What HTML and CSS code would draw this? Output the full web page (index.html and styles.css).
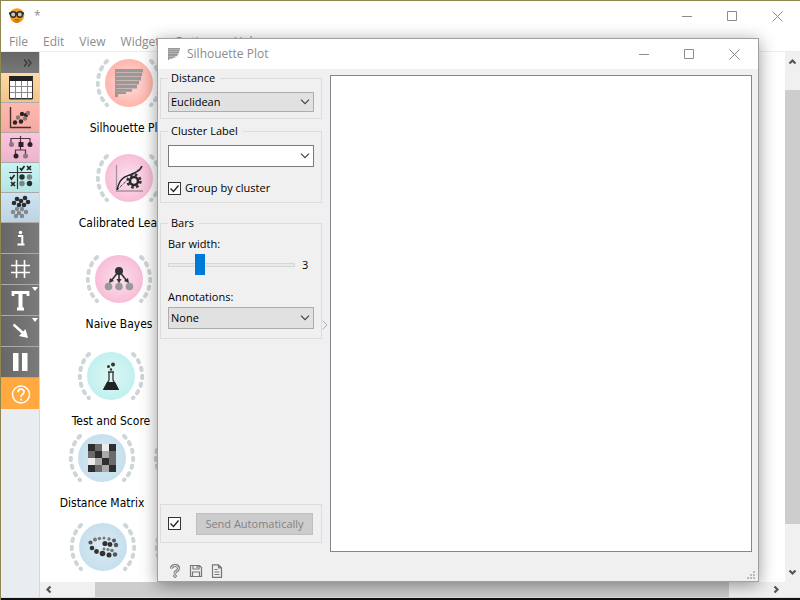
FILE: index.html
```html
<!DOCTYPE html>
<html lang="en">
<head>
<meta charset="utf-8">
<title>Silhouette Plot</title>
<link rel="stylesheet" href="styles.css">
</head>
<body>
<svg class="defs" aria-hidden="true">
  <defs>
    <radialGradient id="red"><stop offset="0" stop-color="#fee0dc"/><stop offset="1" stop-color="#ffb5ac"/></radialGradient>
    <radialGradient id="pink"><stop offset="0" stop-color="#fbe2ee"/><stop offset="1" stop-color="#f8bdd8"/></radialGradient>
    <radialGradient id="cyan"><stop offset="0" stop-color="#dff6f4"/><stop offset="1" stop-color="#c0f1ef"/></radialGradient>
    <radialGradient id="blue"><stop offset="0" stop-color="#dcebf4"/><stop offset="1" stop-color="#c6dfee"/></radialGradient>
    <symbol id="arcs" viewBox="-34 -34 68 68">
      <path d="M-22-22A31 31 0 0 0-22 22M22-22A31 31 0 0 1 22 22" fill="none" stroke="#cdd5d9" stroke-width="4" stroke-linecap="round" stroke-dasharray="2.400 5.600"/>
    </symbol>
    <symbol id="silhouette" viewBox="0 0 28 28">
      <path d="M0 0h28v3.5H0zM0 4h27v3.5H0zM0 8h26v3.5H0zM0 12h24v3.5H0zM0 16h22v3.5H0zM0 20h17v2.7H0zM0 23h11v2H0zM0 25h3v3H0z"/>
      <path d="M0 0h1v28H0z"/>
    </symbol>
    <symbol id="min" viewBox="0 0 11 11"><path d="M0 5.5h10" fill="none" stroke="currentColor"/></symbol>
    <symbol id="max" viewBox="0 0 11 11"><path d="M.5.5h9v9h-9z" fill="none" stroke="currentColor"/></symbol>
    <symbol id="close" viewBox="0 0 11 11"><path d="M.5.5l10 10M10.5.5l-10 10" fill="none" stroke="currentColor"/></symbol>
    <symbol id="chevron" viewBox="0 0 10 6"><path d="M1 .7l4 4 4-4" fill="none" stroke="#444" stroke-width="1.2"/></symbol>
    <symbol id="arrow" viewBox="0 0 9 7"><path d="M1.5 5.5l3-3 3 3" fill="none" stroke="#555" stroke-width="2.2"/></symbol>
  </defs>
</svg>

<div class="window">
  <header class="titlebar">
    <svg class="logo" viewBox="0 0 16 16" aria-hidden="true">
      <circle cx="8" cy="7.5" r="7.3" fill="#f4a01c"/>
      <path d="M3 11q5 4 9 0-1 4-5 4-3-1-4-4z" fill="#d97a10"/>
      <path d="M0 4.3h15v2.2H0z" fill="#333"/>
      <circle cx="4.2" cy="6.5" r="2.7" fill="#c9c9c9" stroke="#2b2b2b" stroke-width="1.4"/>
      <circle cx="10.8" cy="6.5" r="2.7" fill="#c9c9c9" stroke="#2b2b2b" stroke-width="1.4"/>
      <path d="M6 11.5q2 1.2 4 0" fill="none" stroke="#8a4b08"/>
    </svg>
    <span class="caption">*</span>
    <div class="controls">
      <button aria-label="Minimize"><svg><use href="#min"/></svg></button>
      <button aria-label="Maximize"><svg><use href="#max"/></svg></button>
      <button aria-label="Close"><svg><use href="#close"/></svg></button>
    </div>
  </header>
  <nav class="menubar">
    <a href="#">File</a><a href="#">Edit</a><a href="#">View</a><a href="#">Widget</a><a href="#">Options</a><a href="#">Help</a>
  </nav>

  <div class="workspace">
    <aside class="dock">
      <button class="expand" aria-label="Expand"><svg viewBox="0 0 9 8" width="9" height="8"><path d="M1 .5L4 4 1 7.500M5 .5L8 4 5 7.500" fill="none" stroke="#3a3a3a" stroke-width="1.3"/></svg></button>
      <button class="category data" aria-label="Data"><svg viewBox="0 0 39 30">
        <path d="M8.500 4.500h23v21h-23z" fill="#fff" stroke="#333"/><path d="M8 3h24v5H8z" fill="#222"/><path d="M8 13.500h24M8 19.500h24M14.500 8v18M20.500 8v18M26.500 8v18" stroke="#8a8a8a" fill="none"/><path d="M8.500 4v22h23V4" fill="none" stroke="#333"/>
      </svg></button>
      <button class="category visualize" aria-label="Visualize"><svg viewBox="0 0 39 30">
        <path d="M9.500 4v20.500H30" fill="none" stroke="#4b2c2c" stroke-width="1.4"/>
        <g fill="#2c2222"><circle cx="21" cy="11" r="2.200"/><circle cx="25" cy="12" r="2.200"/><circle cx="14" cy="19.500" r="2.200"/><circle cx="20" cy="18.500" r="2.200"/></g>
        <g fill="#8d7775"><circle cx="27" cy="10" r="2.200"/><circle cx="17" cy="14.500" r="2.200"/><circle cx="24" cy="15.500" r="2.200"/></g>
      </svg></button>
      <button class="category model" aria-label="Model"><svg viewBox="0 0 39 30">
        <path d="M10 10V5.500h19V10M19.500 3v8M19.500 11v6M14.500 22v-5h10v5" fill="none" stroke="#54333f" stroke-width="1.2"/>
        <g fill="#2c2226"><path d="M17.500 9h5v5h-5z"/><circle cx="29" cy="11.500" r="2.500"/><circle cx="15" cy="23" r="2.500"/></g>
        <g fill="#8d7780"><circle cx="10.500" cy="11.500" r="2.500"/><circle cx="24.500" cy="23" r="2.500"/></g>
      </svg></button>
      <button class="category evaluate" aria-label="Evaluate"><svg viewBox="0 0 39 30">
        <path d="M8 9.500h23M16.500 3v23" fill="none" stroke="#333" stroke-width="1.2"/>
        <path d="M19 5l1.500 2 3-4M26 3l4 4M30 3l-4 4M9 14l1.500 2 3-4M10 19l4 4M14 19l-4 4" fill="none" stroke="#222" stroke-width="1.7"/>
        <g fill="#2a2d2d"><circle cx="21" cy="14" r="2.700"/><circle cx="28.500" cy="20.500" r="2.700"/></g>
        <g fill="#778585"><circle cx="28.500" cy="14" r="2.700"/><circle cx="21" cy="20.500" r="2.700"/></g>
      </svg></button>
      <button class="category cluster" aria-label="Unsupervised"><svg viewBox="0 0 39 30">
        <g fill="#2a2d2f"><circle cx="16" cy="6" r="2.300"/><circle cx="24" cy="5" r="2.300"/><circle cx="20" cy="8" r="2.300"/><circle cx="13" cy="10" r="2.300"/><circle cx="27" cy="9" r="2.300"/><circle cx="18" cy="12" r="2.300"/><circle cx="23" cy="12" r="2.300"/></g>
        <g fill="#82888c"><circle cx="16" cy="16" r="2.200"/><circle cx="21" cy="16" r="2.200"/><circle cx="12" cy="19" r="2.200"/><circle cx="18" cy="20" r="2.200"/><circle cx="25" cy="19" r="2.200"/><circle cx="15" cy="23" r="2.200"/><circle cx="21" cy="23" r="2.200"/></g>
      </svg></button>
      <button class="action" aria-label="Info"><svg viewBox="0 0 39 30"><circle cx="19.500" cy="9.500" r="1.800" fill="#fff"/><path d="M17 13h4.300v8.500M16.500 21.500h7" fill="none" stroke="#fff" stroke-width="2"/></svg></button>
      <button class="action" aria-label="Grid"><svg viewBox="0 0 39 30"><path d="M10 11.500h19M10 18.500h19M15.500 6v18M23.500 6v18" fill="none" stroke="#fff" stroke-width="1.600"/></svg></button>
      <button class="action" aria-label="Text"><svg viewBox="0 0 39 30"><path d="M12 11V7.500h15V11M19.500 7v17M16 24h7" fill="none" stroke="#fff" stroke-width="2.800"/><path d="M17.500 8h4v17h-4z" fill="#fff"/><path d="M31 2h6l-3 4z" fill="#fff"/></svg></button>
      <button class="action" aria-label="Arrow"><svg viewBox="0 0 39 30"><path d="M12.500 8.500l10 9" stroke="#fff" stroke-width="2.400"/><path d="M27 22l-9-2 6.500-7z" fill="#fff"/><path d="M31 2h6l-3 4z" fill="#fff"/></svg></button>
      <button class="action" aria-label="Pause"><svg viewBox="0 0 39 30"><path d="M12 6h5.500v18H12zM21 6h5.500v18H21z" fill="#fff"/></svg></button>
      <button class="action help" aria-label="Help"><svg viewBox="0 0 39 30"><circle cx="20" cy="15.500" r="8.500" fill="none" stroke="#fff" stroke-width="1.500"/><path d="M17 13.200q0-3 3-3t3 2.800q0 1.500-1.700 2.500-1.300.8-1.300 2.500M20 19.500v2" fill="none" stroke="#fff" stroke-width="1.700"/></svg></button>
    </aside>

    <main class="canvas">
      <figure class="node silhouette">
        <svg viewBox="-34 -34 68 68"><use href="#arcs" x="-34" y="-34" width="68" height="68"/><circle r="24" fill="url(#red)"/><use href="#silhouette" x="-14" y="-14" width="28" height="28" fill="#999"/></svg>
        <figcaption>Silhouette Plot</figcaption>
      </figure>
      <figure class="node calibrated">
        <svg viewBox="-34 -34 68 68"><use href="#arcs" x="-34" y="-34" width="68" height="68"/><circle r="24" fill="url(#pink)"/>
          <path d="M-12.500-13v26H14" fill="none" stroke="#a5939c" stroke-width="1.300"/>
          <path d="M-12 12C-9-2-3-1 3-4S11-7 13-12" fill="none" stroke="#222" stroke-width="1.400"/><path d="M-12 12L13-12" stroke="#333" stroke-dasharray="3 1.500"/>
          <circle cx="5" cy="3" r="6.300" fill="none" stroke="#333" stroke-width="2.800" stroke-dasharray="2.600 2.350"/><circle cx="5" cy="3" r="4" fill="#f9dceb" stroke="#2b2b2b" stroke-width="2.600"/></svg>
        <figcaption>Calibrated Learner</figcaption>
      </figure>
      <figure class="node bayes">
        <svg viewBox="-34 -34 68 68"><use href="#arcs" x="-34" y="-34" width="68" height="68"/><circle r="24" fill="url(#pink)"/>
          <path d="M0-8L-8 2M0-8V2M0-8L8 2" stroke="#333" stroke-width="1.600"/><path d="M-10 4l1-5 4 3zM-2.500 0h5L0 4.500zM10 4l-1-5-4 3z" fill="#333"/><circle cy="-8" r="4" fill="#333"/>
          <g fill="#999"><circle cx="-10.500" cy="7.500" r="3.800"/><circle cy="7.500" r="3.800"/><circle cx="10.500" cy="7.500" r="3.800"/></g></svg>
        <figcaption>Naive Bayes</figcaption>
      </figure>
      <figure class="node score">
        <svg viewBox="-34 -34 68 68"><use href="#arcs" x="-34" y="-34" width="68" height="68"/><circle r="24" fill="url(#cyan)"/>
          <path d="M-3-4h6M-2-4v8l-5 9H7L2 4v-8" fill="none" stroke="#333" stroke-width="1.300"/><path d="M-4 6h8l4 8H-8z" fill="#222"/><circle cx="2" cy="-11.500" r="2" fill="#333"/><circle cx="-2.500" cy="-9.500" r="1.500" fill="#333"/><circle cx="0" cy="-6.500" r="1.200" fill="#333"/></svg>
        <figcaption>Test and Score</figcaption>
      </figure>
      <figure class="node matrix">
        <svg viewBox="-34 -34 68 68"><use href="#arcs" x="-34" y="-34" width="68" height="68"/><circle r="24" fill="url(#blue)"/>
          <g shape-rendering="crispEdges"><path d="M-14-14H14V14H-14z" fill="#aaa"/>
          <path d="M-14-14h7v7h-7zM7-14h7v7H7zM-7-7h7v7h-7zM0 0h7v7H0zM-14 7h7v7h-7zM7 7h7v7H7z" fill="#2e2e2e"/>
          <path d="M-7-14h7v7h-7zM-14-7h7v7h-7zM7 0h7v7H7zM-7 7h7v7h-7zM7-7h7v7H7z" fill="#6b6b6b"/>
          <path d="M0-14h7v7H0zM-14 0h7v7h-7z" fill="#ececec"/></g></svg>
        <figcaption>Distance Matrix</figcaption>
      </figure>
      <figure class="node manifold">
        <svg viewBox="-34 -34 68 68"><use href="#arcs" x="-34" y="-34" width="68" height="68"/><circle r="24" fill="url(#blue)"/>
          <g fill="#333"><circle cx="2" cy="-3.500" r="2.600"/><circle cx="7" cy="-2.500" r="2.400"/><circle cx="-11" cy="1" r="2.300"/><circle cx="-6.500" cy="4.500" r="2.400"/><circle cx="-.5" cy="6.500" r="2.800"/><circle cx="6" cy="8" r="2.500"/></g>
          <g fill="#555"><circle cx="13" cy="-2" r="2.200"/><circle cx="12" cy="7.500" r="2.200"/><circle cx="-12.500" cy="-4.500" r="2.100"/><circle cx="11" cy="-6.500" r="2"/></g>
          <g fill="#777"><circle cx="-8" cy="-7.500" r="2"/><circle cx="-3.500" cy="-8.500" r="1.700"/><circle cx="1" cy="-9" r="1.500"/><circle cx="6" cy="-8" r="1.700"/><circle cx="1" cy="2" r="1.400"/><circle cx="5" cy="2.500" r="1.600"/><circle cx="9" cy="3.500" r="1.800"/></g></svg>
      </figure>
      <figure class="node behind-matrix"><svg viewBox="-34 -34 68 68"><use href="#arcs" x="-34" y="-34" width="68" height="68"/></svg></figure>
      <figure class="node behind-manifold"><svg viewBox="-34 -34 68 68"><use href="#arcs" x="-34" y="-34" width="68" height="68"/></svg></figure>
    </main>

    <div class="scroll vertical"><svg><use href="#arrow"/></svg><i></i><svg class="down"><use href="#arrow"/></svg></div>
    <div class="scroll horizontal"><svg class="left"><use href="#arrow"/></svg><i></i><svg class="right"><use href="#arrow"/></svg></div>
  </div>
  <div class="desktop"></div>
</div>

<section class="dialog" role="dialog" aria-labelledby="dialog-title">
  <header class="titlebar">
    <svg class="icon" aria-hidden="true"><use href="#silhouette" fill="#999"/></svg>
    <h1 id="dialog-title">Silhouette Plot</h1>
    <div class="controls">
      <button aria-label="Minimize"><svg><use href="#min"/></svg></button>
      <button aria-label="Maximize"><svg><use href="#max"/></svg></button>
      <button aria-label="Close"><svg><use href="#close"/></svg></button>
    </div>
  </header>
  <form class="content">
    <div class="settings">
      <fieldset>
        <legend>Distance</legend>
        <div class="combo short"><select aria-label="Distance"><option>Euclidean</option></select><svg><use href="#chevron"/></svg></div>
      </fieldset>
      <fieldset>
        <legend>Cluster Label</legend>
        <div class="combo editable"><select aria-label="Cluster Label"><option></option></select><svg><use href="#chevron"/></svg></div>
        <label class="check"><input type="checkbox" checked><svg viewBox="0 0 13 13"><path d="M2.500 6.500l3 3 5-6" fill="none" stroke="#222" stroke-width="1.300"/></svg>Group by cluster</label>
      </fieldset>
      <fieldset class="bars">
        <legend>Bars</legend>
        <label for="width">Bar width:</label>
        <div class="slider"><input id="width" type="range" min="1" max="10" value="3"><output for="width">3</output></div>
        <label for="annotations">Annotations:</label>
        <div class="combo"><select id="annotations"><option>None</option></select><svg><use href="#chevron"/></svg></div>
      </fieldset>
      <div class="send">
        <label class="check"><input type="checkbox" checked aria-label="Send Automatically"><svg viewBox="0 0 13 13"><path d="M2.500 6.500l3 3 5-6" fill="none" stroke="#222" stroke-width="1.300"/></svg></label>
        <button type="button" disabled>Send Automatically</button>
      </div>
      <div class="status">
        <button type="button" aria-label="Help"><svg viewBox="0 0 14 14"><path d="M3.500 4.500Q3.500 1.500 7 1.500t3.500 2.800q0 1.700-2 2.700Q7 7.700 7 9.500" fill="none" stroke="#777" stroke-width="3"/><path d="M3.500 4Q3.800 1.500 7 1.500t3.500 2.800q0 1.700-2 2.700Q7 7.700 7 9" fill="none" stroke="#f0f0f0" stroke-width="1"/><circle cx="7" cy="12" r="1.400" fill="none" stroke="#777"/></svg></button>
        <button type="button" aria-label="Save"><svg viewBox="0 0 14 14" fill="none" stroke="#777" stroke-width="1.200"><path d="M1.500 1.500h9l2 2v9h-11zM4 1.500v3.500h6V1.500M3.500 12.500V8h7v4.500M8 2v2"/></svg></button>
        <button type="button" aria-label="Report"><svg viewBox="0 0 14 14" fill="none" stroke="#777" stroke-width="1.200"><path d="M2.500.8h6l3 3v9.500h-9zM8.500.8v3h3M4.500 5.500h3M4.500 8h5M4.500 10.500h5"/></svg></button>
      </div>
    </div>
    <button class="collapse" type="button" aria-label="Collapse"><svg viewBox="0 0 6 10"><path d="M.7.7L5 5 .7 9.300" fill="none" stroke="#aaa"/></svg></button>
    <div class="plot"></div>
  </form>
  <svg class="grip" viewBox="0 0 8 8" aria-hidden="true"><path d="M6 0h2v2H6zM3 3h2v2H3zM6 3h2v2H6zM0 6h2v2H0zM3 6h2v2H3zM6 6h2v2H6z" fill="#bbb"/></svg>
</section>
</body>
</html>
```
FILE: styles.css
```css
* { box-sizing: border-box; }

body {
  margin: 0;
  height: 100vh;
  overflow: hidden;
  position: relative;
  font: 11px/14px "Open Sans", sans-serif;
  color: #000;
}

button { border: 0; padding: 0; background: none; font: inherit; color: inherit; }
svg { display: block; }
.defs { position: absolute; width: 0; height: 0; }

.window {
  height: 100%;
  display: flex;
  flex-direction: column;
  background: #fff;
  border-top: 1px solid #8f8650;
  border-left: 1px solid #8f8650;
}

.titlebar {
  display: flex;
  align-items: center;
  height: 30px;
  background: #fff;
  color: #8c8c8c;
}
.window > .titlebar { padding: 0 17px 0 8px; }
.logo { width: 16px; height: 16px; }
.caption { margin-left: 9px; font-size: 12px; line-height: 16px; }
.controls { display: flex; gap: 34px; margin-left: auto; }
.controls svg { width: 11px; height: 11px; }

.menubar {
  display: flex;
  gap: 15px;
  height: 21px;
  padding: 2px 8px 0;
  border-bottom: 1px solid #eee;
  font-size: 12px;
  line-height: 18px;
}
.menubar a { color: #8c8c8c; text-decoration: none; }

.workspace {
  flex: 1;
  min-height: 0;
  display: grid;
  grid-template-columns: 39px 1fr 15px;
  grid-template-rows: 1fr 15px;
  background: #f0f0f0;
}

.dock {
  grid-row: 1 / 3;
  display: flex;
  flex-direction: column;
  background: #e9edf1;
  border-right: 1px solid #d5d8da;
}
.dock button { width: 100%; border-bottom: 1px solid #aaa; }
.dock button svg { width: 39px; height: 30px; }
.dock .expand {
  height: 21px;
  display: flex;
  justify-content: flex-end;
  align-items: center;
  padding-right: 7px;
  border: 0;
  background: linear-gradient(#666, #787878);
}
.dock .expand svg { width: 9px; height: 8px; }
.category { height: 30px; }
.data { background: linear-gradient(#ffd9a8, #f3c389); }
.visualize { background: linear-gradient(#ffb9b1, #f3a9a1); }
.model { background: linear-gradient(#fac5dd, #edb3cd); }
.evaluate { background: linear-gradient(#c8f5f3, #b5e5e3); }
.cluster { background: linear-gradient(#cfe3f0, #bdd4e3); }
.action { height: 31px; background: linear-gradient(90deg, #676767, #7b7b7b); }
.dock .help { background: #ffa940; border: 0; }

.canvas { position: relative; overflow: hidden; background: #fff; }

/* Nodes sit freely on the canvas; left/top mark the centre of the disc. */
.node {
  position: absolute;
  width: 120px;
  margin: -34px 0 0 -60px;
  display: flex;
  flex-direction: column;
  align-items: center;
  gap: 4px;
}
.node svg { width: 68px; height: 68px; }
.node figcaption {
  font: 12px/15px "DejaVu Sans Condensed", "DejaVu Sans", sans-serif;
  white-space: nowrap;
}
.silhouette { left: 89px; top: 31px; }
.calibrated { left: 89px; top: 126px; }
.bayes { left: 79px; top: 227px; }
.score { left: 71px; top: 324px; }
.matrix { left: 62px; top: 406px; }
.manifold { left: 63px; top: 495px; }
.behind-matrix { left: 147px; top: 406px; }
.behind-manifold { left: 148px; top: 495px; }

.scroll { display: flex; align-items: center; }
.scroll svg { width: 9px; height: 7px; flex: none; }
.scroll i { background: #cdcdcd; }
.vertical { flex-direction: column; padding: 6px 0; }
.vertical i { width: 100%; flex: 1; margin: 25px 0 45px; }
.horizontal { grid-column: 2; padding: 0 4px; }
.horizontal i { height: 100%; flex: 1; margin: 0 43px 0 42px; }
.down { transform: rotate(180deg); }
.left { transform: rotate(-90deg); }
.right { transform: rotate(90deg); }
.desktop { height: 3px; background: #111; border-top: 1px solid #ddd; }

/* Floating widget window */
.dialog {
  position: absolute;
  left: 157px;
  right: 41px;
  top: 38px;
  bottom: 18px;
  display: flex;
  flex-direction: column;
  background: #f0f0f0;
  border: 1px solid #a0a0a0;
  box-shadow: 0 3px 16px rgba(0, 0, 0, .4);
}
.dialog .titlebar { padding: 0 18px 0 10px; }
.icon { width: 12px; height: 12px; }
.dialog h1 { margin: 0 0 0 7px; font-size: 12px; font-weight: 400; line-height: 16px; }

.content { flex: 1; min-height: 0; display: flex; }
.settings {
  width: 164px;
  padding: 3px 0 3px 2px;
  display: flex;
  flex-direction: column;
}
fieldset {
  min-width: 0;
  margin: 0 0 6px;
  padding: 8px 7px 6px;
  border: 1px solid #dcdcdc;
}
legend { padding: 0 5px 0 3px; line-height: 12px; }
.bars { margin-top: 8px; padding-bottom: 9px; }
.bars > label { display: block; margin-bottom: 3px; }

.combo { position: relative; height: 22px; }
.combo.short { height: 20px; }
.combo svg {
  position: absolute;
  right: 4px;
  top: 50%;
  width: 10px;
  height: 6px;
  margin-top: -3px;
  pointer-events: none;
}
select {
  appearance: none;
  width: 100%;
  height: 100%;
  padding: 0 18px 0 2px;
  border: 1px solid #adadad;
  border-radius: 0;
  background: #e1e1e1;
  font: inherit;
  color: inherit;
}
.editable { margin-bottom: 13px; }
.editable select { background: #fff; border-color: #7a7a7a; }

.check { position: relative; display: flex; align-items: center; gap: 4px; height: 16px; }
.check input {
  appearance: none;
  width: 13px;
  height: 13px;
  margin: 0;
  border: 1px solid #333;
  background: #fff;
}
.check svg { position: absolute; left: 0; width: 13px; height: 13px; pointer-events: none; }

.slider { display: flex; align-items: center; gap: 7px; margin: 0 0 14px; height: 22px; }
.slider input { appearance: none; flex: 1; min-width: 0; height: 22px; margin: 0; background: none; }
.slider input::-webkit-slider-runnable-track { height: 4px; border: 1px solid #d6d6d6; background: #e7eaea; }
.slider input::-webkit-slider-thumb { appearance: none; width: 10px; height: 21px; margin-top: -10px; background: #007ad9; }
.slider output { width: 12px; }

.send {
  display: flex;
  align-items: center;
  gap: 15px;
  height: 39px;
  margin-top: auto;
  padding: 0 8px 0 7px;
  border: 1px solid #dcdcdc;
}
.send button { flex: 1; height: 22px; background: #ccc; border: 1px solid #bfbfbf; color: #838383; }
.status { display: flex; gap: 7px; margin-top: 21px; padding-left: 8px; }
.status svg { width: 14px; height: 14px; }

.collapse { width: 8px; display: flex; align-items: center; }
.collapse svg { width: 6px; height: 10px; }
.plot { flex: 1; margin: 6px 6px 29px 0; background: #fff; border: 1px solid #828790; }
.grip { position: absolute; right: 3px; bottom: 2px; width: 8px; height: 8px; }
```
